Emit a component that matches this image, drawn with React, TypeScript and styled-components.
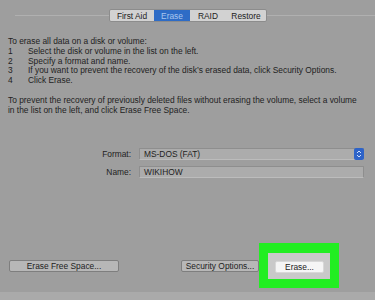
import React from 'react';
import styled, { createGlobalStyle } from 'styled-components';

const GlobalStyle = createGlobalStyle`
  html, body {
    margin: 0;
    padding: 0;
    background: #9e9e9e;
  }
  body {
    font-family: "Liberation Sans", Arial, sans-serif;
    color: #1e1e1e;
  }
`;

const Window = styled.div`
  width: 375px;
  height: 300px;
  display: flex;
  flex-direction: column;
  background: #9e9e9e;
  overflow: hidden;
`;

const TabRow = styled.div`
  display: flex;
  align-items: center;
  margin-top: 9px;
  height: 13px;
`;

const Rule = styled.div<{ $w?: number }>`
  flex: ${(p) => (p.$w ? `0 0 ${p.$w}px` : '1')};
  height: 1px;
  background: #b0b0b0;
`;

const Tabs = styled.div`
  display: flex;
  height: 13px;
  border: 1px solid #8c8c8c;
  border-radius: 2px;
  background: #d2d2d2;
  box-sizing: border-box;
  overflow: hidden;
`;

const Tab = styled.div<{ $active?: boolean; $w: number }>`
  width: ${(p) => p.$w}px;
  display: flex;
  align-items: center;
  justify-content: center;
  font-size: 8.4px;
  color: ${(p) => (p.$active ? '#a9c6ee' : '#222')};
  background: ${(p) => (p.$active ? '#2e6cc6' : 'transparent')};
`;

const Text = styled.div`
  margin-top: 15px;
  padding-left: 8px;
  font-size: 8.4px;
  line-height: 9.8px;
  color: #222;
`;

const Step = styled.div`
  display: flex;
`;

const Num = styled.span`
  width: 20px;
`;

const Para = styled.p`
  margin: 10px 0 0;
`;

const Form = styled.div`
  margin-top: 32px;
  display: grid;
  grid-template-columns: 131px 225px;
  column-gap: 8px;
  row-gap: 6px;
  align-items: center;
`;

const Label = styled.label`
  text-align: right;
  font-size: 8.4px;
  color: #222;
`;

const Field = styled.div`
  height: 12px;
  box-sizing: border-box;
  display: flex;
  align-items: center;
  padding-left: 4px;
  font-size: 8.4px;
  background: #acacac;
  border: 1px solid #8e8e8e;
  border-bottom-color: #bcbcbc;
  border-radius: 1px;
  color: #222;
`;

const PopupText = styled.span`
  flex: 1;
`;

const Stepper = styled.div`
  width: 10px;
  height: 12px;
  margin-right: -1px;
  background: #2d63c8;
  border-radius: 2px;
  display: flex;
  align-items: center;
  justify-content: center;
`;

const Spacer = styled.div`
  flex: 1;
`;

const ButtonRow = styled.div`
  display: flex;
  align-items: center;
  padding-left: 9px;
  margin-bottom: 4px;
`;

const Button = styled.div<{ $w: number; $light?: boolean }>`
  width: ${(p) => p.$w}px;
  height: 12px;
  box-sizing: border-box;
  display: flex;
  align-items: center;
  justify-content: center;
  font-size: 8.4px;
  white-space: nowrap;
  color: #222;
  background: ${(p) => (p.$light ? '#f5f5f5' : '#b7b7b7')};
  border: 1px solid ${(p) => (p.$light ? '#d8d8d8' : '#7e7e7e')};
  border-radius: 2px;
`;

const Gap = styled.div<{ $w: number }>`
  width: ${(p) => p.$w}px;
`;

const Highlight = styled.div`
  border: 9px solid #22ee22;
  border-top-width: 10px;
  background: #c9c9c9;
  padding: 8px 6px 6px 7px;
`;

const BottomBand = styled.div`
  height: 8px;
  background: #aaaaaa;
`;

export default function App() {
  return (
    <Window>
      <GlobalStyle />
      <TabRow>
        <Gap $w={15} />
        <Rule $w={94} />
        <Tabs>
          <Tab $w={44}>First Aid</Tab>
          <Tab $w={36} $active>Erase</Tab>
          <Tab $w={36}>RAID</Tab>
          <Tab $w={40}>Restore</Tab>
        </Tabs>
        <Rule />
      </TabRow>
      <Text>
        <div>To erase all data on a disk or volume:</div>
        <Step><Num>1</Num>Select the disk or volume in the list on the left.</Step>
        <Step><Num>2</Num>Specify a format and name.</Step>
        <Step><Num>3</Num>If you want to prevent the recovery of the disk’s erased data, click Security Options.</Step>
        <Step><Num>4</Num>Click Erase.</Step>
        <Para>
          To prevent the recovery of previously deleted files without erasing the volume, select a volume
          <br />
          in the list on the left, and click Erase Free Space.
        </Para>
      </Text>
      <Form>
        <Label>Format:</Label>
        <Field>
          <PopupText>MS-DOS (FAT)</PopupText>
          <Stepper>
            <svg width="6" height="8" viewBox="0 0 6 8">
              <path d="M1 3 L3 1 L5 3 M1 5 L3 7 L5 5" stroke="#cfe0ff" strokeWidth="1" fill="none" />
            </svg>
          </Stepper>
        </Field>
        <Label>Name:</Label>
        <Field>WIKIHOW</Field>
      </Form>
      <Spacer />
      <ButtonRow>
        <Button $w={110}>Erase Free Space...</Button>
        <Gap $w={62} />
        <Button $w={78}>Security Options...</Button>
        <Highlight>
          <Button $w={49} $light>Erase...</Button>
        </Highlight>
      </ButtonRow>
      <BottomBand />
    </Window>
  );
}
